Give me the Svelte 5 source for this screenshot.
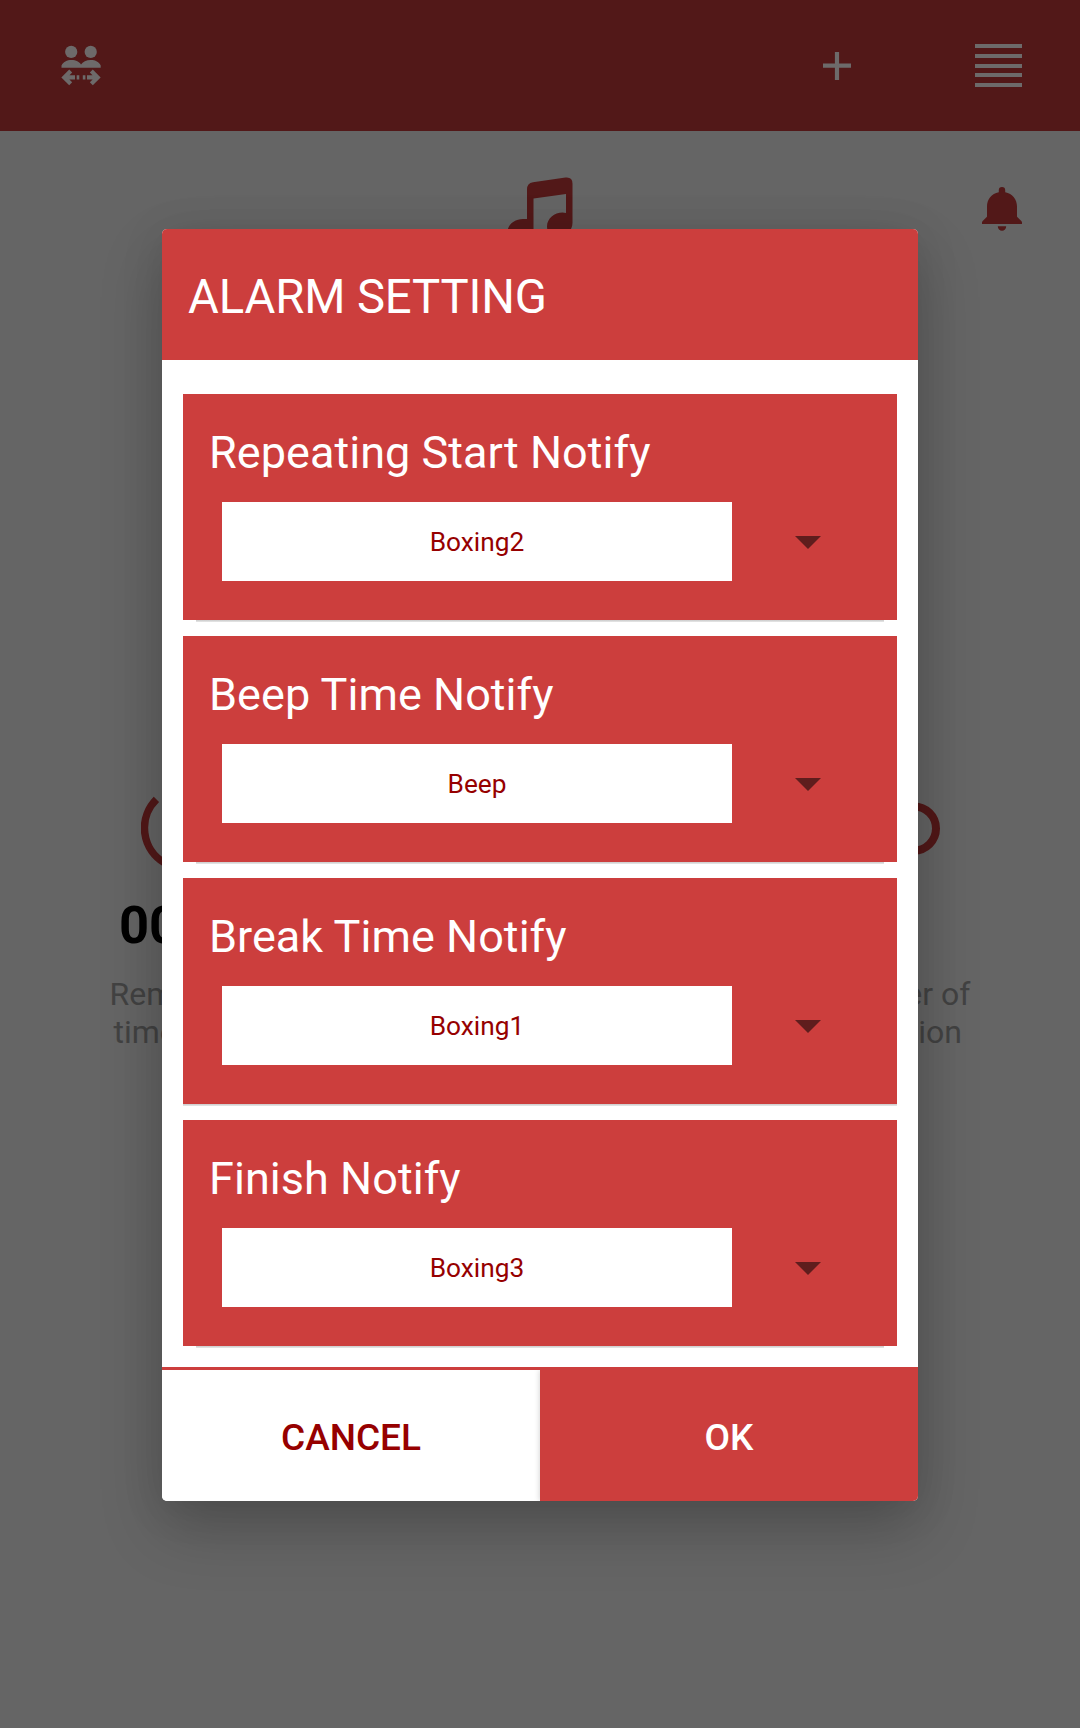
<script>
  const settings = [
    { title: 'Repeating Start Notify', sound: 'Boxing2' },
    { title: 'Beep Time Notify', sound: 'Beep' },
    { title: 'Break Time Notify', sound: 'Boxing1' },
    { title: 'Finish Notify', sound: 'Boxing3' }
  ];
</script>

<div class="page">
  <header class="toolbar">
    <svg class="people" width="40" height="41" viewBox="-0.500 0 40 41">
      <g fill="#6d6a6a">
        <circle cx="9.7" cy="6.9" r="6.1" />
        <circle cx="29.2" cy="6.9" r="6.1" />
        <path d="M0 22.800V20.500C1.500 17 5.500 15 10 15s8 2 9.500 4.500c1.700-2.500 5.300-4.500 9.800-4.500s8.500 2 9.900 5.500v2.300Z" />
        <path d="M15.200 30.300h2.600v4.200h-2.600zM21.300 30.300h2.600v4.200h-2.600z" />
      </g>
      <path d="M13.500 32.400H3M9.200 26 2.800 32.400l6.400 6.400M25.500 32.400H36M29.800 26 36.200 32.400l-6.400 6.400" fill="none" stroke="#6d6a6a" stroke-width="4.200" />
    </svg>
    <svg class="plus" width="28" height="28" viewBox="0 0 28 28">
      <path d="M14 0v28M0 13.700h28" stroke="#6d6a6a" stroke-width="4.200" />
    </svg>
    <div class="menu"><i></i><i></i><i></i><i></i><i></i></div>
  </header>

  <section class="top-icons">
    <svg class="music" width="66" height="64" viewBox="508 176.500 66 64">
      <path fill="#521818" d="M527 218.500V189q0-6.300 6-7.200L565.500 177.100q7-.8 7 6.200V222c0 8-6 14-14 14-7 0-11.500-4-11.500-10 0-8 7.500-14 15.500-14q1.800 0 3.500.6V193.600L533.500 198v30c0 8-7 13-14 13-7 0-12-4-12-9.500 0-7.500 7.500-13 15.500-13Z" />
    </svg>
    <svg class="bell" width="40" height="45" viewBox="0 0 40 45">
      <path fill="#521818" d="M16.800 5.300V3.200a3.200 3.200 0 0 1 6.400 0v2.100C30.500 6.800 35 12.500 35 19.500v10.300l4.300 4.200q.7.700.7 1.600V37H0v-1.400q0-.9.700-1.600L5 29.800V19.500C5 12.500 9.500 6.800 16.800 5.300ZM15.800 39.200h8.400a4.200 4.600 0 0 1-8.400 0Z" />
    </svg>
  </section>

  <section class="stats">
    <div class="stat left">
      <svg width="88" height="88" viewBox="0 0 88 88">
        <path d="M15.400 15.400A40.300 40.300 0 1 0 44 3.700" fill="none" stroke="#521818" stroke-width="7.500" />
      </svg>
      <strong>00</strong>
      <p>Remaining<br /><span>time total</span></p>
    </div>
    <div class="stat right">
      <svg width="88" height="88" viewBox="0 0 88 88">
        <circle cx="61" cy="44.500" r="22" fill="none" stroke="#521818" stroke-width="8" />
      </svg>
      <strong>0</strong>
      <p>Number of<br />repetition</p>
    </div>
  </section>

  <div class="dialog">
    <h1>ALARM SETTING</h1>
    <div class="list">
      {#each settings as item, i}
        <div class="card" class:wide={i === 2}>
          <h2>{item.title}</h2>
          <div class="row">
            <div class="field">{item.sound}</div>
            <svg width="26" height="13" viewBox="0 0 26 13"><path d="M0 0h26L13 13Z" fill="#5f1d1d" /></svg>
          </div>
        </div>
      {/each}
    </div>
    <div class="actions">
      <button class="cancel">CANCEL</button>
      <button class="ok">OK</button>
    </div>
  </div>
</div>

<style>
  :global(body) { margin: 0; background: #656565; }
  .page {
    position: relative;
    width: 1080px;
    height: 1728px;
    overflow: hidden;
    background: #656565;
    font-family: Roboto, sans-serif;
  }
  .toolbar {
    display: flex;
    align-items: flex-start;
    box-sizing: border-box;
    height: 131px;
    padding: 44px 58px 0 61px;
    background: #521818;
  }
  .people { margin-top: 1px; }
  .plus { margin: 8px 124px 0 auto; }
  .menu { display: flex; flex-direction: column; justify-content: space-between; width: 47px; height: 43px; }
  .menu i { height: 4px; background: #6d6a6a; }
  .top-icons { display: flex; padding: 46px 58px 0 508px; height: 64px; }
  .bell { margin: 10px 0 0 auto; }
  .stats { display: flex; justify-content: space-between; padding: 543px 83px 0 85px; }
  .stat { display: flex; flex-direction: column; align-items: center; width: 200px; }
  .stat.left strong { align-self: flex-start; margin-left: 34px; }
  .stat.right p { margin-right: 5px; }
  strong { margin-top: 22px; font-size: 52.500px; line-height: 62px; color: #000; }
  .stat p { margin: 19px 0 0; font-size: 32px; line-height: 38px; color: #424242; text-align: center; white-space: nowrap; }
  .stat.left p { text-align: left; }
  .stat.left span { margin-left: 4px; }
  .dialog {
    position: absolute;
    left: 162px;
    top: 229px;
    width: 756px;
    height: 1272px;
    display: flex;
    flex-direction: column;
    overflow: hidden;
    border-radius: 5px;
    background: #fff;
    box-shadow: 0 28px 64px rgba(0, 0, 0, .2), 0 6px 44px rgba(0, 0, 0, .1);
  }
  h1 {
    margin: 0;
    height: 131px;
    padding-left: 26px;
    background: #cc3e3d;
    color: #fff;
    font-size: 47.250px;
    font-weight: 400;
    line-height: 136px;
    letter-spacing: -.12px;
  }
  .list { flex: 1; display: flex; flex-direction: column; gap: 16px; padding: 34px 21px 0; }
  .card {
    position: relative;
    box-sizing: border-box;
    height: 226px;
    padding: 29px 0 0 26px;
    background: #cc3e3d;
  }
  .card::after {
    content: '';
    position: absolute;
    left: 13px;
    right: 13px;
    top: 100%;
    height: 2px;
    background: linear-gradient(#cacaca, #e8e8e8);
  }
  .card.wide::after { left: 0; right: 0; }
  h2 { margin: 0; color: #fff; font-size: 45px; font-weight: 400; line-height: 60px; letter-spacing: .04px; }
  .row { display: flex; align-items: center; margin: 19px 0 0 13px; }
  .row svg { margin-top: 2px; }
  .field {
    width: 510px;
    height: 79px;
    margin-right: 63px;
    background: #fff;
    color: #960000;
    font-size: 26.250px;
    line-height: 80px;
    text-align: center;
  }
  .actions { display: flex; height: 131px; border-top: 3px solid #cc3e3d; }
  button {
    flex: 1;
    border: 0;
    padding: 3px 0 0;
    font: 500 37px Roboto, sans-serif;
  }
  .cancel { background: #fff; color: #960000; }
  .ok { background: #cc3e3d; color: #fff; box-shadow: 0 0 6px rgba(0, 0, 0, .2); clip-path: inset(0 0 0 -8px); }
</style>
